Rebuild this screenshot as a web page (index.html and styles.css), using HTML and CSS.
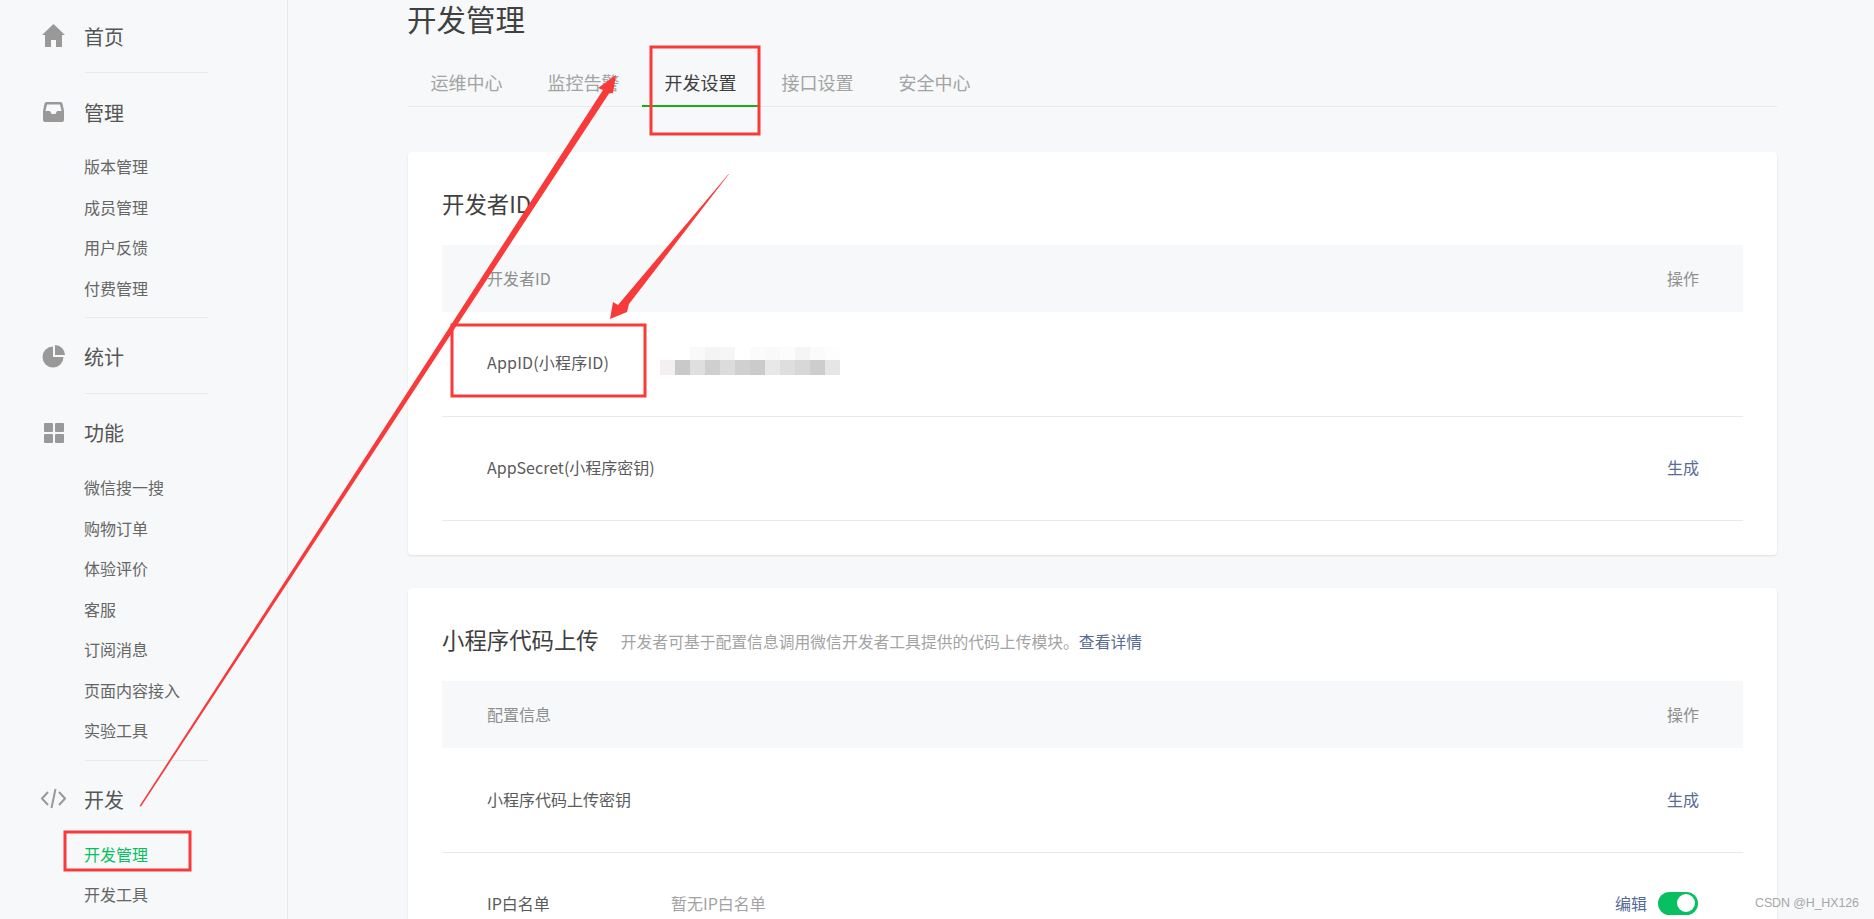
FILE: index.html
```html
<!DOCTYPE html>
<html lang="zh-CN">
<head>
<meta charset="utf-8">
<title>开发管理</title>
<link rel="stylesheet" href="styles.css">
</head>
<body>
<div class="page">
  <nav class="sidebar">
    <div class="nav-head first">
      <svg class="nav-icon" viewBox="0 0 26 26"><path d="M13.5 2 25 13h-3v12h-6v-7h-5v7H5V13H2Z"/></svg>
      <span>首页</span>
    </div>
    <div class="nav-rule"></div>
    <div class="nav-head">
      <svg class="nav-icon" viewBox="0 0 26 26"><path fill-rule="evenodd" d="M6.5 4h14q1.5 0 2 1.5L24 13v9q0 2-2 2H5q-2 0-2-2v-9L4.500 5.500Q5 4 6.500 4ZM7 6.500 5.500 13H10l1.500 3h4l1.500-3h4.500L20 6.500Z"/></svg>
      <span>管理</span>
    </div>
    <ul class="nav-list">
      <li>版本管理</li>
      <li>成员管理</li>
      <li>用户反馈</li>
      <li>付费管理</li>
    </ul>
    <div class="nav-rule"></div>
    <div class="nav-head raised">
      <svg class="nav-icon" viewBox="0 0 26 26"><path d="M13 3.500A10.500 10.500 0 1 0 23.500 14H13ZM15 2A10 10 0 0 1 25 12H15Z"/></svg>
      <span>统计</span>
    </div>
    <div class="nav-rule"></div>
    <div class="nav-head raised">
      <svg class="nav-icon" viewBox="0 0 26 26"><rect x="4" y="4" width="9" height="9" rx="1"/><rect x="15" y="4" width="9" height="9" rx="1"/><rect x="4" y="15" width="9" height="9" rx="1"/><rect x="15" y="15" width="9" height="9" rx="1"/></svg>
      <span>功能</span>
    </div>
    <ul class="nav-list">
      <li>微信搜一搜</li>
      <li>购物订单</li>
      <li>体验评价</li>
      <li>客服</li>
      <li>订阅消息</li>
      <li>页面内容接入</li>
      <li>实验工具</li>
    </ul>
    <div class="nav-rule"></div>
    <div class="nav-head raised">
      <svg class="nav-icon code" viewBox="0 0 26 26"><path d="M8 6 2 12.500 8 19M19 6 25 12.500 19 19M15.500 3 11.500 22"/></svg>
      <span>开发</span>
    </div>
    <ul class="nav-list">
      <li class="active">开发管理</li>
      <li>开发工具</li>
    </ul>
  </nav>

  <main class="main">
    <h1 class="page-title">开发管理</h1>
    <div class="tabs">
      <a class="tab">运维中心</a>
      <a class="tab">监控告警</a>
      <a class="tab current">开发设置</a>
      <a class="tab">接口设置</a>
      <a class="tab">安全中心</a>
    </div>

    <section class="card">
      <h2 class="card-title">开发者ID</h2>
      <div class="thead"><span>开发者ID</span><span>操作</span></div>
      <div class="row">
        <div class="cell"><span class="label-id">AppID(小程序ID)</span>
          <svg class="blur" width="182" height="28" viewBox="0 0 182 28">
            <rect x="32" y="0" width="15" height="13" fill="#f9f9f9"/><rect x="47" y="0" width="15" height="13" fill="#f4f4f4"/><rect x="62" y="0" width="15" height="13" fill="#f6f6f6"/><rect x="92" y="0" width="15" height="13" fill="#fbfbfb"/><rect x="107" y="0" width="15" height="13" fill="#f9f9f9"/><rect x="122" y="0" width="15" height="13" fill="#fcfcfc"/><rect x="137" y="0" width="15" height="13" fill="#f5f5f5"/><rect x="152" y="0" width="15" height="13" fill="#fbfbfb"/><rect x="167" y="0" width="15" height="13" fill="#fdfdfd"/>
            <rect x="2" y="13" width="15" height="15" fill="#f4f0f0"/><rect x="17" y="13" width="15" height="15" fill="#c9c9c9"/><rect x="32" y="13" width="15" height="15" fill="#dfdfdf"/><rect x="47" y="13" width="15" height="15" fill="#cfcfcf"/><rect x="62" y="13" width="15" height="15" fill="#dcdcdc"/><rect x="77" y="13" width="15" height="15" fill="#d0d0d0"/><rect x="92" y="13" width="15" height="15" fill="#cbcbcb"/><rect x="107" y="13" width="15" height="15" fill="#e8e8e8"/><rect x="122" y="13" width="15" height="15" fill="#dedede"/><rect x="137" y="13" width="15" height="15" fill="#d8d8d8"/><rect x="152" y="13" width="15" height="15" fill="#cdcdcd"/><rect x="167" y="13" width="15" height="15" fill="#e6e6e6"/>
          </svg>
        </div>
      </div>
      <div class="row">
        <div class="cell"><span>AppSecret(小程序密钥)</span></div>
        <a class="link">生成</a>
      </div>
    </section>

    <section class="card">
      <h2 class="card-title">小程序代码上传<small class="card-desc">开发者可基于配置信息调用微信开发者工具提供的代码上传模块。<a class="link">查看详情</a></small></h2>
      <div class="thead"><span>配置信息</span><span>操作</span></div>
      <div class="row">
        <div class="cell"><span>小程序代码上传密钥</span></div>
        <a class="link">生成</a>
      </div>
      <div class="row">
        <div class="cell"><span class="label-ip">IP白名单</span><span class="muted">暂无IP白名单</span></div>
        <div class="actions"><a class="link">编辑</a><span class="switch"><span class="knob"></span></span></div>
      </div>
    </section>
  </main>
</div>

<svg class="marks" width="1874" height="919" viewBox="0 0 1874 919">
  <rect class="mark-box" x="651" y="47" width="108" height="87"/>
  <rect class="mark-box" x="452" y="325" width="193" height="71"/>
  <rect class="mark-box" x="65" y="832" width="125" height="38"/>
  <polygon class="mark-arrow" points="139.500,806 603,90 598,88 616,75 613,93 609,93.500 141,806.500"/>
  <polygon class="mark-arrow" points="729,174 629,304 627,312 610,319 613,302 618,305 728.500,174"/>
</svg>
<div class="watermark">CSDN @H_HX126</div>
</body>
</html>
```

FILE: styles.css
```css
* { box-sizing: border-box; }
html, body {
  margin: 0;
  height: 100%;
  overflow: hidden;
}
body {
  background: #f6f8f9;
  color: #353535;
  font-family: "Noto Sans CJK SC", "Liberation Sans", sans-serif;
  font-size: 16px;
  font-weight: 400;
}
.page {
  display: flex;
  height: 919px;
  overflow: hidden;
}

/* sidebar */
.sidebar {
  flex: 0 0 288px;
  height: 919px;
  padding-top: 17px;
  border-right: 1px solid #e7e9eb;
}
.nav-head {
  display: flex;
  align-items: center;
  gap: 18px;
  height: 40px;
  margin-top: 20px;
  padding-left: 40px;
  font-size: 20px;
  line-height: 40px;
  color: #555;
}
.nav-head.first { margin-top: 0; }
.nav-head.raised span { margin-bottom: 2px; }
.nav-icon {
  flex: 0 0 26px;
  width: 26px;
  height: 26px;
  margin-bottom: 4px;
  fill: #999;
}
.nav-icon.code {
  fill: none;
  stroke: #999;
  stroke-width: 2;
}
.nav-rule {
  width: 123px;
  height: 1px;
  margin: 15px 0 0 85px;
  background: #e7e9eb;
}
.nav-list {
  list-style: none;
  margin: 13px 0 0;
  padding: 0 0 0 84px;
}
.nav-list + .nav-rule { margin-top: 9px; }
.nav-list li {
  height: 40.500px;
  line-height: 40.500px;
  font-size: 16px;
  color: #666;
}
.nav-list li.active { color: #07c160; }

/* main */
.main {
  flex: 1 1 auto;
  min-width: 0;
  padding: 0 97px 0 120px;
}
.page-title {
  margin: 0 0 0 -1px;
  height: 38px;
  font-size: 29.500px;
  font-weight: 400;
  line-height: 36px;
  color: #404040;
}
.tabs {
  display: flex;
  height: 47px;
  margin-top: 22px;
  border-bottom: 1px solid #e7e9eb;
}
.tab {
  height: 47px;
  width: 117px;
  text-align: center;
  font-size: 18px;
  line-height: 44px;
  color: #a3a3a3;
}
.tab.current {
  color: #404040;
  border-bottom: 2px solid #1aad19;
}

.card {
  height: 403px;
  margin-top: 45px;
  padding: 36px 34px 34px;
  background: #fff;
  border-radius: 4px;
  box-shadow: 0 1px 2px rgba(150, 150, 150, 0.25);
}
.card + .card {
  height: 500px;
  margin-top: 33px;
}
.card-title {
  display: flex;
  align-items: center;
  height: 32px;
  margin: 0 0 25px;
  padding-bottom: 2px;
  font-size: 22.400px;
  font-weight: 400;
  line-height: 32px;
  color: #404040;
}
.card-desc {
  margin: 6px 0 0 22px;
  font-size: 15.800px;
  color: #a3a3a3;
}
.thead {
  display: flex;
  justify-content: space-between;
  align-items: center;
  height: 67px;
  padding: 0 44px 2px 45px;
  background: #f6f8f9;
  color: #8f8f8f;
}
.row {
  display: flex;
  justify-content: space-between;
  align-items: center;
  height: 105px;
  padding: 0 44px 3px 45px;
  border-bottom: 1px solid #e7e9eb;
  color: #5a5a5a;
}
.row:last-child { height: 104px; }
.cell {
  display: flex;
  align-items: center;
}
.label-id {
  width: 171px;
  margin-bottom: 2px;
  letter-spacing: 0.200px;
}
.label-ip { width: 184px; }
.blur {
  display: block;
  margin-bottom: 3px;
}
.muted { color: #a3a3a3; }
.link { color: #576b95; }
.actions {
  display: flex;
  align-items: center;
  gap: 11px;
  margin-right: 1px;
}
.switch {
  display: flex;
  justify-content: flex-end;
  align-items: center;
  width: 40px;
  height: 23px;
  padding-right: 3px;
  background: #07c160;
  border-radius: 12px;
}
.knob {
  width: 18px;
  height: 18px;
  background: #fff;
  border-radius: 50%;
}

/* screenshot annotations */
.marks {
  position: absolute;
  left: 0;
  top: 0;
  pointer-events: none;
}
.mark-box {
  fill: none;
  stroke: #f93a3a;
  stroke-width: 3;
}
.mark-arrow { fill: #f93a3a; }
.watermark {
  position: absolute;
  left: 1755px;
  top: 895px;
  font-family: "Liberation Sans", sans-serif;
  font-size: 12.500px;
  line-height: 16px;
  letter-spacing: -0.150px;
  color: #a8a8a8;
}
```
